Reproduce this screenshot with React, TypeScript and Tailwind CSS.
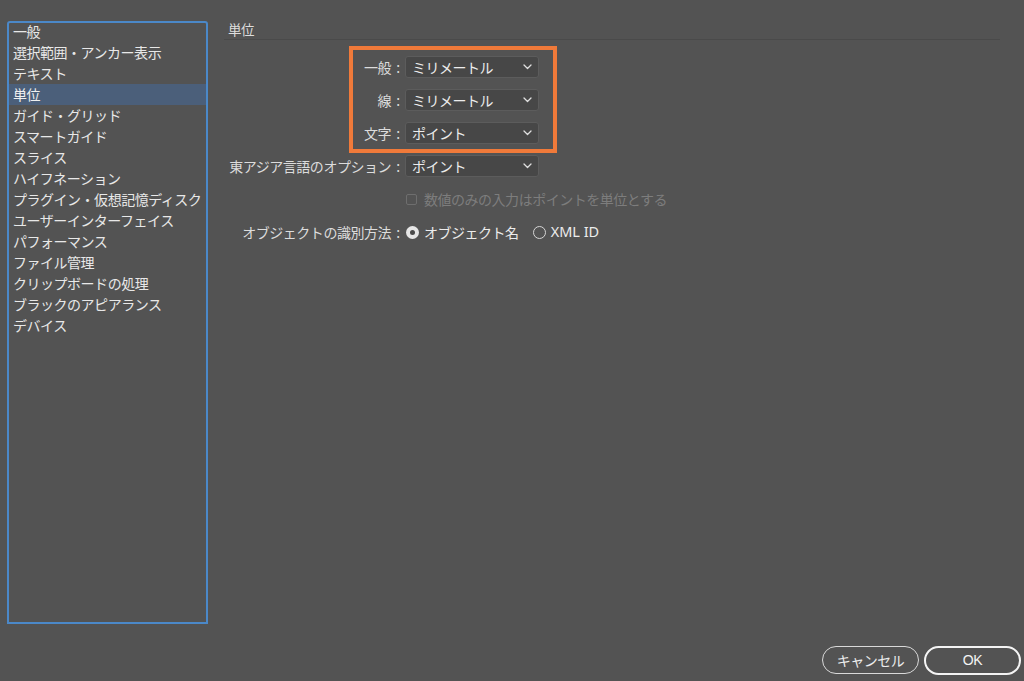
import React from 'react';

const font = { fontFamily: '"Noto Sans CJK JP", "Noto Sans", sans-serif' };

const categories = [
    '一般',
    '選択範囲・アンカー表示',
    'テキスト',
    '単位',
    'ガイド・グリッド',
    'スマートガイド',
    'スライス',
    'ハイフネーション',
    'プラグイン・仮想記憶ディスク',
    'ユーザーインターフェイス',
    'パフォーマンス',
    'ファイル管理',
    'クリップボードの処理',
    'ブラックのアピアランス',
    'デバイス',
];

function Chevron() {
    return (
        <svg width="9" height="6" viewBox="0 0 9 6" className="shrink-0">
            <polyline points="1,1 4.5,4.5 8,1" fill="none" stroke="#e0e0e0" strokeWidth="1.3" strokeLinecap="round" strokeLinejoin="round" />
        </svg>
    );
}

function Select({ value }: { value: string }) {
    return (
        <div className="w-[134px] h-[22px] bg-[#474747] border border-[#5c5c5c] rounded-[3px] flex items-center justify-between pl-[6px] pr-[6px]">
            <span className="text-[14px] text-[#ececec] leading-none">{value}</span>
            <Chevron />
        </div>
    );
}

// label column ends at x=406 with the colon sitting a few px before the control
function Label({ text }: { text: string }) {
    return (
        <div className="w-[181px] flex justify-end items-center text-[14px] text-[#dcdcdc] whitespace-nowrap">
            <span>{text}</span>
            <span className="w-[14px] text-center">:</span>
        </div>
    );
}

function Row({ label, value }: { label: string; value: string }) {
    return (
        <div className="flex items-center h-[22px]">
            <Label text={label} />
            <Select value={value} />
        </div>
    );
}

export default function App() {
    return (
        <div
            className="w-[1024px] h-[681px] bg-[#535353] flex relative overflow-hidden tracking-[-0.03em]"
            style={font}
        >
            {/* category list */}
            <div className="ml-[7px] mt-[21px] w-[201px] h-[603px] border-2 border-[#4b88c8] rounded-t-[3px] shrink-0">
                <div className="-mt-[2px]">
                    {categories.map((c) => (
                        <div
                            key={c}
                            className={`h-[21px] flex items-center pl-[4px] text-[14px] whitespace-nowrap ${c === '単位' ? 'bg-[#4b5f7a] text-[#f0f0f0]' : 'text-[#e8e8e8]'}`}
                        >
                            {c}
                        </div>
                    ))}
                </div>
            </div>

            {/* settings pane */}
            <div className="flex-1 ml-[16px] pt-[20px] pr-[24px]">
                <div className="pl-[4px] text-[13.5px] text-[#dedede] h-[18px] leading-[18px]">単位</div>
                <div className="h-px bg-[#4a4a4a] mt-[1px]" />

                <div className="mt-[16px] flex flex-col gap-[11px]">
                    <Row label="一般" value="ミリメートル" />
                    <Row label="線" value="ミリメートル" />
                    <Row label="文字" value="ポイント" />
                    <Row label="東アジア言語のオプション" value="ポイント" />
                </div>

                <div className="mt-[12px] ml-[182px] flex items-center gap-[7px] h-[20px]">
                    <div className="w-[11px] h-[11px] border border-[#6e6e6e] rounded-[2px]" />
                    <span className="text-[14px] text-[#7d7d7d]">数値のみの入力はポイントを単位とする</span>
                </div>

                <div className="mt-[13px] flex items-center h-[20px]">
                    <Label text="オブジェクトの識別方法" />
                    <div className="w-[13px] h-[13px] rounded-full bg-[#e6e6e6] flex items-center justify-center ml-[1px]">
                        <div className="w-[5px] h-[5px] rounded-full bg-[#4a4a4a]" />
                    </div>
                    <span className="ml-[5px] text-[14px] text-[#ececec]">オブジェクト名</span>
                    <div className="ml-[14px] w-[13px] h-[13px] rounded-full border border-[#d6d6d6]" />
                    <span className="ml-[5px] text-[14.5px] text-[#ececec] tracking-normal" style={{ fontFamily: '"Noto Sans", "Noto Sans CJK JP", sans-serif' }}>XML ID</span>
                </div>
            </div>

            {/* annotation highlight */}
            <div className="absolute left-[349px] top-[46px] w-[208px] h-[107px] border-[4px] border-[#f07a3a] pointer-events-none" />

            {/* buttons */}
            <div className="absolute right-[3px] bottom-[6px] flex gap-[5px]">
                <button className="w-[97px] h-[28px] rounded-full border-[1.5px] border-[#d9d9d9] text-[14px] text-[#ececec] flex items-center justify-center">
                    キャンセル
                </button>
                <button className="w-[97px] h-[29px] rounded-full border-2 border-[#f4f4f4] text-[14px] text-[#f4f4f4] flex items-center justify-center" style={{ fontFamily: '"Liberation Sans", sans-serif' }}>
                    OK
                </button>
            </div>
        </div>
    );
}
